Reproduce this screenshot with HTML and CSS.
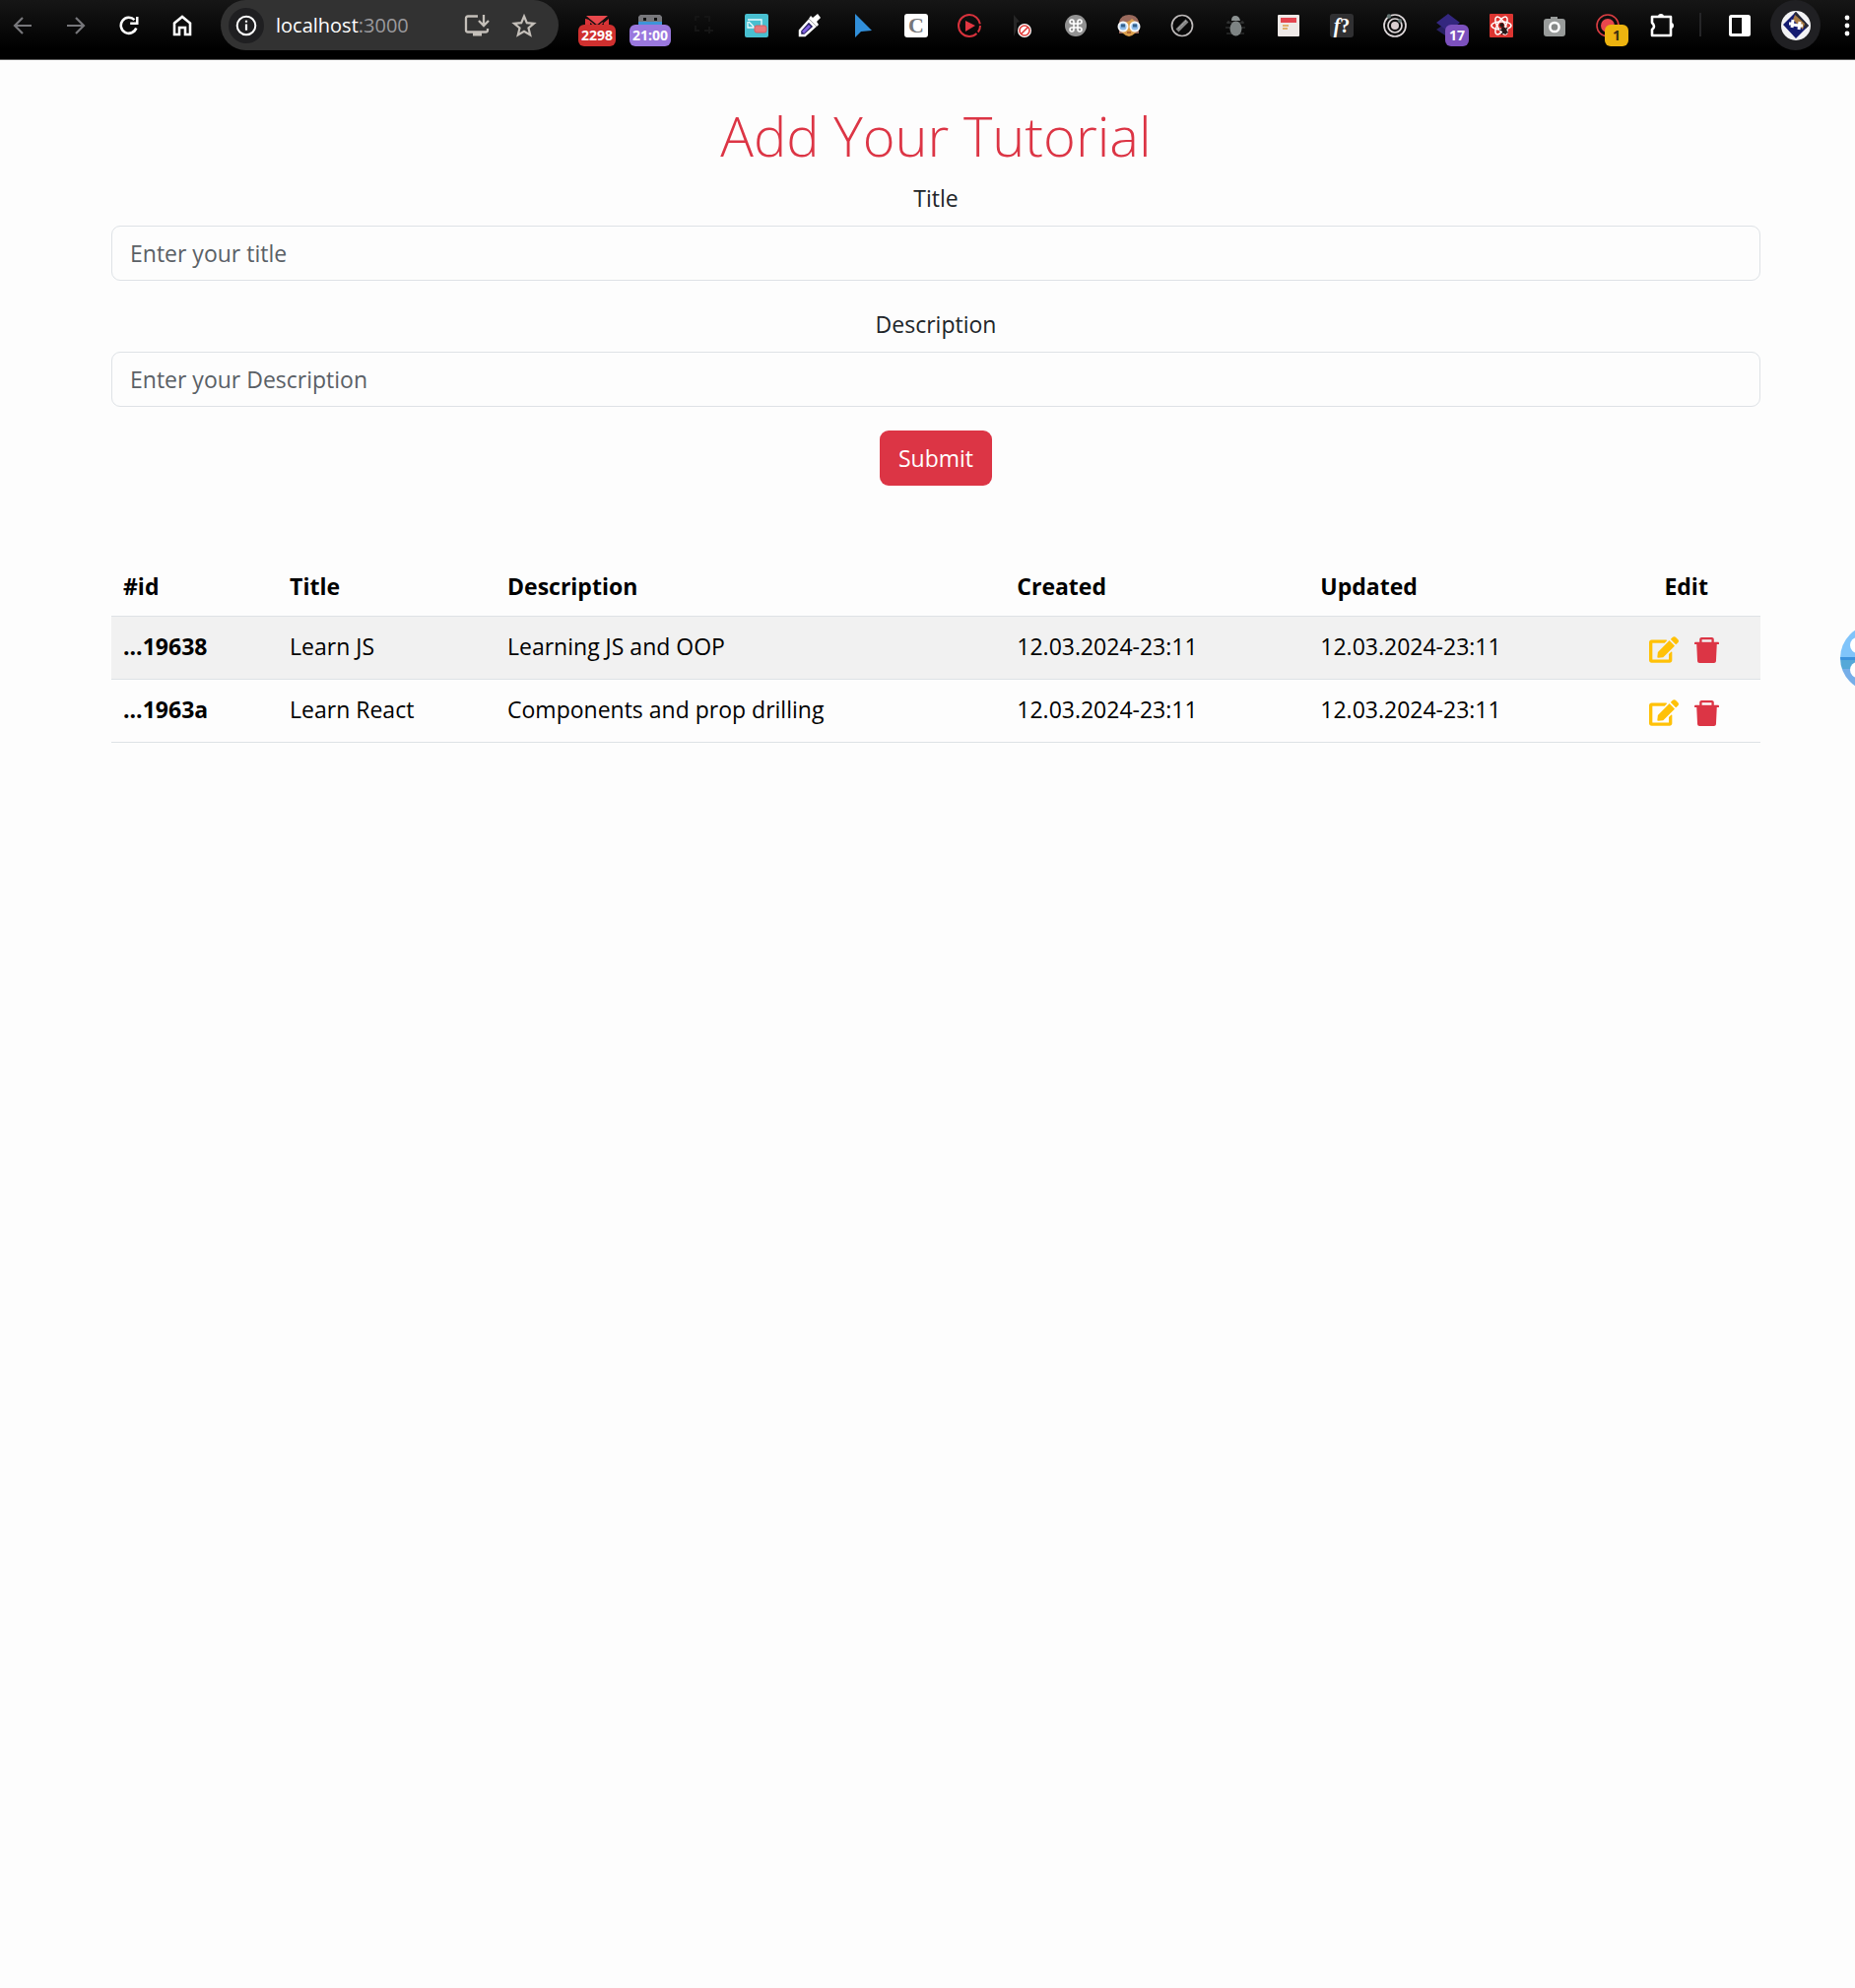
FILE: index.html
```html
<!DOCTYPE html>
<html lang="en">
<head>
<meta charset="utf-8">
<meta name="viewport" content="width=device-width, initial-scale=1">
<title>Add Your Tutorial</title>
<link rel="stylesheet" href="styles.css">
</head>
<body>
<header class="toolbar">
  <button class="tool dim" aria-label="Back"><svg width="20" height="20" viewBox="0 0 20 20"><path d="M19 10H2M10 2l-8 8 8 8" fill="none" stroke="currentColor" stroke-width="2.2"/></svg></button>
  <button class="tool dim" aria-label="Forward"><svg width="20" height="20" viewBox="0 0 20 20"><path d="M1 10h17M10 2l8 8-8 8" fill="none" stroke="currentColor" stroke-width="2.2"/></svg></button>
  <button class="tool" aria-label="Reload"><svg width="20" height="20" viewBox="0 0 20 20"><path d="M17.300 12.500A8 8 0 1 1 15.500 4.200" fill="none" stroke="currentColor" stroke-width="2.600"/><path d="M19.500 1v8h-8.300V6.500H17V1z" fill="currentColor"/></svg></button>
  <button class="tool" aria-label="Home"><svg width="20" height="22" viewBox="0 0 20 22"><path d="M2 8.500 10 2l8 6.500V20h-5v-7H7v7H2z" fill="none" stroke="currentColor" stroke-width="2.600"/></svg></button>

  <div class="address">
    <button class="site-info" aria-label="Site information"><svg width="22" height="22" viewBox="0 0 22 22"><circle cx="11" cy="11" r="9.300" fill="none" stroke="currentColor" stroke-width="2"/><path d="M11 9.500v6.300M11 5.800v2" stroke="currentColor" stroke-width="2.200"/></svg></button>
    <span class="url">localhost<span class="port">:3000</span></span>
    <button class="address-action" aria-label="Install app"><svg width="26" height="24" viewBox="0 0 26 24"><path d="M14 2.500H4Q2 2.500 2 4.500v12q0 2 2 2h18q2 0 2-2V15M20 1v10M15 7l5 5 5-5" fill="none" stroke="currentColor" stroke-width="2.300"/><path d="M9 18h9v4.500H9z" fill="currentColor"/></svg></button>
    <button class="address-action" aria-label="Bookmark"><svg width="26" height="26" viewBox="0 0 26 26"><path d="m13 3.500 2.800 6.700 7.200.6-5.500 4.700 1.700 7-6.200-3.800-6.200 3.800 1.700-7L3 10.800l7.200-.6z" fill="none" stroke="currentColor" stroke-width="2.200"/></svg></button>
  </div>

  <nav class="extensions" aria-label="Extensions">
    <button class="tool" aria-label="Mail"><svg width="24" height="24" viewBox="0 0 24 24"><path d="M0 5v15h5V9l7 6 7-6v11h5V5l-5 4z" fill="#d93438"/><path d="M1 2h22l-7 8H8z" fill="#e8484c"/><path d="m1 3 11 9 11-9" stroke="#111" stroke-width="1.500" fill="none"/></svg><span class="badge red">2298</span></button>
    <button class="tool" aria-label="Timer"><svg width="24" height="24" viewBox="0 0 24 24"><path d="M2 1h20l2 2v6H0V3z" fill="#77777b"/><path d="M0 8h24v12H0z" fill="#3e94d8"/><path d="M5 4h3v3H5zM16 4h3v3h-3z" fill="#111"/></svg><span class="badge violet">21:00</span></button>
    <button class="tool" aria-label="Capture area"><svg width="24" height="24" viewBox="0 0 24 24"><path d="M4 7V3h4M13 3h5v5M4 12v5h4M18 13v7M13 17h9" fill="none" stroke="#151515" stroke-width="2"/></svg></button>
    <button class="tool" aria-label="Picture in picture"><svg width="24" height="24" viewBox="0 0 24 24"><rect width="24" height="24" rx="2" fill="#48bfd0"/><path d="M3 6h14v6M3 8v6h7M9 13 4 8" fill="none" stroke="#eafcff" stroke-width="1.300"/><rect x="10" y="12" width="12" height="7" rx="2" fill="#e7797d" stroke="#d85c62"/></svg></button>
    <button class="tool" aria-label="Eyedropper"><svg width="24" height="24" viewBox="0 0 24 24"><path d="M11 7 2 17v5h5l10-9z" fill="#211a5c" stroke="#fff" stroke-width="2.500"/><path d="m5 19 7-7" stroke="#8061df" stroke-width="3"/><path d="m11 5 8 8 2-2-2-3 4-4-3-4-5 4-2-2z" fill="#fff"/></svg></button>
    <button class="tool" aria-label="Pointer"><svg width="24" height="24" viewBox="0 0 24 24"><path d="M4 0v24l6-6 11-1z" fill="#318fda"/></svg></button>
    <button class="tool" aria-label="Citation"><span class="letter-tile">C</span></button>
    <button class="tool" aria-label="Play"><svg width="24" height="24" viewBox="0 0 24 24"><circle cx="12" cy="12" r="11" fill="none" stroke="#d8323c" stroke-width="2" stroke-dasharray="7 2 58 3"/><path d="m8 7 10 5-10 6z" fill="#e23742"/></svg></button>
    <button class="tool" aria-label="Cursor blocker"><svg width="24" height="24" viewBox="0 0 24 24"><path d="M3 1v22l3-7V9l3-1z" fill="#262626"/><circle cx="14" cy="17" r="7" fill="#fff"/><circle cx="14" cy="17" r="5" fill="none" stroke="#df3c39" stroke-width="1.600"/><path d="m10.500 20.500 7-7" stroke="#df3c39" stroke-width="1.600"/></svg></button>
    <button class="tool" aria-label="Command"><svg width="22" height="22" viewBox="0 0 22 22"><circle cx="11" cy="11" r="11" fill="#929292"/><path d="M9 9H7a2 2 0 1 1 2-2v8a2 2 0 1 1-2-2h8a2 2 0 1 1-2 2V7a2 2 0 1 1 2 2z" fill="none" stroke="#fff" stroke-width="1.600"/></svg></button>
    <button class="tool" aria-label="Reader"><svg width="24" height="24" viewBox="0 0 24 24"><path d="M2 20V8q2-7 10-7t10 7v12h-4H5z" fill="#9a6a5d"/><path d="M3 9q9 0 12-4l6 5v4q-2 8-9 9-7-1-9-9z" fill="#d99e4c"/><g fill="#8dbbe9" stroke="#f5f7fa" stroke-width="2"><circle cx="6" cy="13" r="4.500"/><circle cx="18" cy="13" r="4.500"/></g><path d="M4 12h4M16 12h4" stroke="#35618b" stroke-width="3"/><path d="M10 19h4" stroke="#9d522c" stroke-width="1.500"/></svg></button>
    <button class="tool" aria-label="Ruler"><svg width="24" height="24" viewBox="0 0 24 24"><circle cx="12" cy="12" r="10.500" fill="#080808" stroke="#bdb9b9" stroke-width="1.700"/><path d="m7 17 10-10" stroke="#858585" stroke-width="4"/><path d="m8 15 8-8" stroke="#bbb" stroke-dasharray="1 1"/></svg></button>
    <button class="tool" aria-label="Bug"><svg width="24" height="24" viewBox="0 0 24 24"><path d="M3 9h18M2 14h20M3 20h18M5 7v3M19 7v3" stroke="#3d3f3f"/><path d="M8 7q0-5 4-5t5 5z" fill="#8c9292"/><ellipse cx="12.500" cy="15" rx="6" ry="7.500" fill="#7d8383"/></svg></button>
    <button class="tool" aria-label="Page notes"><svg width="22" height="22" viewBox="0 0 22 22"><rect width="22" height="22" rx="1" fill="#eee9e7"/><path d="M3 3h16v5H3z" fill="#e44550"/><path d="M5 11h6M5 14h5" stroke="#dd9d45" stroke-width="1.700"/></svg></button>
    <button class="tool" aria-label="Font finder"><span class="font-tile"><i>f</i>?</span></button>
    <button class="tool" aria-label="Target"><svg width="24" height="24" viewBox="0 0 24 24"><g fill="none" stroke="#ded8da" stroke-width="1.700"><circle cx="12" cy="12" r="11"/><circle cx="12" cy="12" r="7"/></g><circle cx="12" cy="12" r="4" fill="#d8cdce"/><circle cx="6" cy="2.500" r="2.200" fill="#637371"/><circle cx="17" cy="7" r="2" fill="#637371"/></svg></button>
    <button class="tool" aria-label="Layers"><svg width="24" height="24" viewBox="0 0 24 24"><path d="m0 16 12-8 12 8-12 8z" fill="#282063"/><path d="m0 9 12-9 12 9-12 9z" fill="#34277f"/></svg><span class="badge purple offset">17</span></button>
    <button class="tool" aria-label="React tools"><svg width="24" height="24" viewBox="0 0 24 24"><rect width="24" height="24" rx="1" fill="#dc3531"/><g fill="none" stroke="#fff" stroke-width="1.500"><ellipse cx="12" cy="12" rx="10" ry="4"/><ellipse cx="12" cy="12" rx="10" ry="4" transform="rotate(60 12 12)"/><ellipse cx="12" cy="12" rx="10" ry="4" transform="rotate(120 12 12)"/></g><ellipse cx="15" cy="17" rx="2.500" ry="4" fill="#241717" transform="rotate(-25 15 17)"/><circle cx="12.500" cy="11.500" r="2.200" fill="#241717"/><path d="m10 16 9 3M18 14l-6 7" stroke="#241717" stroke-width="1.200"/></svg></button>
    <button class="tool" aria-label="Screenshot"><svg width="24" height="24" viewBox="0 0 24 24"><path d="M8 5V3h7v2h5q3 0 3 3v12q0 3-3 3H4q-3 0-3-3V8q0-3 3-3z" fill="#989b9a"/><circle cx="12" cy="13.500" r="4.600" fill="#858887" stroke="#fff" stroke-width="2.500"/></svg></button>
    <button class="tool" aria-label="Recorder"><svg width="24" height="24" viewBox="0 0 24 24"><circle cx="12" cy="12" r="11" fill="none" stroke="#d93d42" stroke-width="1.600"/><circle cx="12" cy="12" r="7" fill="#e8474d"/></svg><span class="badge yellow offset">1</span></button>
    <button class="tool" aria-label="Extensions"><svg width="26" height="26" viewBox="0 0 26 26"><path d="M4 4h19v19H4v-6q4-3 0-7z" fill="none" stroke="currentColor" stroke-width="2.600" stroke-linejoin="round"/><path d="M10 4a3 3 0 0 1 6 0zM23 10a3 3 0 0 1 0 6z" fill="currentColor"/></svg></button>
  </nav>
  <span class="divider"></span>
  <button class="tool" aria-label="Side panel"><svg width="22" height="22" viewBox="0 0 22 22"><path d="M2.500 0h17Q22 0 22 2.500v17q0 2.500-2.500 2.500h-17Q0 22 0 19.500v-17Q0 0 2.500 0M3 3v16h10V3z" fill="currentColor" fill-rule="evenodd"/></svg></button>
  <button class="profile" aria-label="Profile"><svg width="30" height="30" viewBox="0 0 30 30"><circle cx="15" cy="15" r="15" fill="#f2f2f4"/><path d="m15 1 13 14-13 13L2 14z" fill="#141b70"/><path d="m15 1 13 14-3 3L13 3z" fill="#292933"/><path d="m14 4 10 9-2 6-10-10z" fill="#a87a44"/><path d="m12 9-1 8M19 11l-1 8M8 13h4M12 14l6 1M18 15h4" stroke="#fff" stroke-width="3"/></svg></button>
  <button class="menu" aria-label="Menu"><svg width="6" height="22" viewBox="0 0 6 22"><g fill="currentColor"><circle cx="3" cy="3" r="2.400"/><circle cx="3" cy="11" r="2.400"/><circle cx="3" cy="19" r="2.400"/></g></svg></button>
</header>

<main class="page">
  <h1>Add Your Tutorial</h1>
  <form class="tutorial-form">
    <div class="field">
      <label for="title">Title</label>
      <input id="title" type="text" placeholder="Enter your title">
    </div>
    <div class="field">
      <label for="description">Description</label>
      <input id="description" type="text" placeholder="Enter your Description">
    </div>
    <button class="submit" type="submit">Submit</button>
  </form>

  <table class="tutorials">
    <colgroup><col class="col-id"><col class="col-title"><col class="col-description"><col class="col-date"><col class="col-date"><col class="col-edit"></colgroup>
    <thead>
      <tr><th scope="col">#id</th><th scope="col">Title</th><th scope="col">Description</th><th scope="col">Created</th><th scope="col">Updated</th><th scope="col" class="center">Edit</th></tr>
    </thead>
    <tbody>
      <tr>
        <th scope="row">...19638</th><td>Learn JS</td><td>Learning JS and OOP</td><td>12.03.2024-23:11</td><td>12.03.2024-23:11</td>
        <td><div class="actions">
          <button class="edit" aria-label="Edit Learn JS"><svg width="30" height="27" viewBox="0 0 576 512"><use href="#icon-edit"/></svg></button>
          <button class="delete" aria-label="Delete Learn JS"><svg width="25" height="26" viewBox="128 112 768 800"><use href="#icon-trash"/></svg></button>
        </div></td>
      </tr>
      <tr>
        <th scope="row">...1963a</th><td>Learn React</td><td>Components and prop drilling</td><td>12.03.2024-23:11</td><td>12.03.2024-23:11</td>
        <td><div class="actions">
          <button class="edit" aria-label="Edit Learn React"><svg width="30" height="27" viewBox="0 0 576 512"><use href="#icon-edit"/></svg></button>
          <button class="delete" aria-label="Delete Learn React"><svg width="25" height="26" viewBox="128 112 768 800"><use href="#icon-trash"/></svg></button>
        </div></td>
      </tr>
    </tbody>
  </table>
</main>

<button class="assistant" aria-label="Open assistant"><svg width="15" height="56" viewBox="0 0 15 56"><clipPath id="disc"><circle cx="34" cy="28" r="34"/></clipPath><g clip-path="url(#disc)"><path d="M0 0h15v28H0z" fill="#80c4fa"/><path d="M0 27h15v3H0z" fill="#3c92dc"/><path d="M0 30h15v9H0z" fill="#55a8d8"/><path d="M0 39h15v17H0z" fill="#76aee8"/></g><circle cx="18" cy="15" r="8" fill="#fff"/><circle cx="18" cy="40" r="8" fill="#fff"/></svg></button>

<svg class="sprite" width="0" height="0" aria-hidden="true">
  <defs>
    <path id="icon-edit" fill="currentColor" d="M402.600 83.200l90.200 90.200c3.800 3.800 3.800 10 0 13.800L274.400 405.600l-92.800 10.300c-12.400 1.400-22.900-9.100-21.500-21.500l10.300-92.800L388.800 83.200c3.800-3.800 10-3.800 13.800 0zm162-22.900l-48.800-48.800c-15.200-15.200-39.900-15.200-55.200 0l-35.400 35.400c-3.800 3.800-3.800 10 0 13.800l90.200 90.200c3.800 3.800 10 3.800 13.800 0l35.400-35.400c15.200-15.300 15.200-40 0-55.200zM384 346.200V448H64V128h229.800c3.200 0 6.200-1.300 8.500-3.500l40-40c7.600-7.600 2.200-20.500-8.500-20.500H48C21.500 64 0 85.500 0 112v352c0 26.500 21.500 48 48 48h352c26.500 0 48-21.500 48-48V306.200c0-10.700-12.900-16-20.500-8.500l-40 40c-2.200 2.300-3.500 5.300-3.500 8.500z"/>
    <path id="icon-trash" fill="currentColor" d="M864 256H736v-80c0-35.300-28.700-64-64-64H352c-35.300 0-64 28.700-64 64v80H160c-17.700 0-32 14.300-32 32v32c0 4.400 3.600 8 8 8h60.400l24.700 523c1.600 34.100 29.800 61 63.900 61h454c34.200 0 62.300-26.800 63.900-61l24.700-523H888c4.400 0 8-3.600 8-8v-32c0-17.700-14.300-32-32-32zm-200 0H360v-72h304v72z"/>
  </defs>
</svg>
</body>
</html>
```
FILE: styles.css
```css
* { box-sizing: border-box; }

body {
  margin: 0;
  background: #fdfdfd;
  color: #212529;
  font: 23px/36px "Open Sans", "Noto Sans", sans-serif;
}

button {
  padding: 0;
  border: 0;
  background: none;
  color: inherit;
  font: inherit;
}

svg { display: block; }

.sprite { position: absolute; }

/* Browser toolbar */
.toolbar {
  display: flex;
  gap: 8px;
  height: 61px;
  padding-bottom: 9px;
  overflow: hidden;
  background: linear-gradient(#161616, #000 50px);
  border-bottom: 1px solid #5a5a5a;
  color: #fff;
}

.tool {
  position: relative;
  display: flex;
  flex: none;
  align-items: center;
  justify-content: center;
  width: 46px;
  height: 51px;
}

.dim { color: #77777b; }

.address {
  display: flex;
  flex: none;
  align-items: center;
  gap: 12px;
  width: 343px;
  height: 51px;
  margin: 0 8px;
  padding: 0 22px 0 8px;
  border-radius: 26px;
  background: #323232;
}

.site-info {
  display: flex;
  align-items: center;
  justify-content: center;
  width: 36px;
  height: 36px;
  border-radius: 50%;
  background: #1f1f21;
}

.url {
  flex: 1;
  font-size: 20px;
}

.port { color: #9b9a9e; }

.address-action {
  margin-left: 10px;
  color: #c4bfb9;
}

.extensions {
  display: flex;
  gap: 8px;
}

.badge {
  position: absolute;
  top: 25px;
  left: 50%;
  height: 22px;
  padding: 0 3px;
  border-radius: 6px;
  transform: translateX(-50%);
  color: #fff;
  font-size: 14px;
  font-weight: 700;
  line-height: 22px;
}

.offset {
  left: 32px;
  width: 24px;
}

.red { background: #d0302f; }
.violet { background: #9a78de; }
.purple { background: #7c51bd; }
.yellow { background: #edb30f; color: #3b2d12; }

.letter-tile,
.font-tile {
  width: 24px;
  height: 24px;
  border-radius: 3px;
  background: #fff;
  color: #77777a;
  font: 700 22px/24px "Liberation Serif", serif;
}

.font-tile {
  background: #303032;
  color: #fff;
  font-size: 20px;
}

.divider {
  flex: none;
  width: 2px;
  height: 24px;
  margin: 13px 8px 0;
  background: #252527;
}

.profile {
  display: flex;
  flex: none;
  align-items: center;
  justify-content: center;
  width: 51px;
  height: 51px;
  border-radius: 50%;
  background: #202023;
}

.menu {
  display: flex;
  flex: none;
  align-items: center;
  margin-left: 16px;
}

/* Tutorial page */
.page {
  padding: 40px 96px 48px 113px;
}

h1 {
  margin: 0 0 10px;
  color: #dc3545;
  font-size: 56px;
  font-weight: 300;
  line-height: 72px;
  text-align: center;
}

.tutorial-form {
  display: flex;
  flex-direction: column;
  align-items: center;
  gap: 24px;
  margin-bottom: 72px;
}

.field {
  display: flex;
  flex-direction: column;
  align-items: center;
  gap: 10px;
  width: 100%;
}

.field + .field { padding-top: 2px; }

input {
  width: 100%;
  height: 56px;
  padding: 8px 18px;
  border: 1px solid #dee2e6;
  border-radius: 9px;
  background: #fdfdfd;
  color: #212529;
  font: inherit;
}

input::placeholder { color: #5a6066; opacity: 1; }

.submit {
  height: 56px;
  padding: 0 19px;
  border-radius: 9px;
  background: #dc3545;
  color: #fff;
}

.tutorials {
  width: 100%;
  border-collapse: collapse;
  table-layout: fixed;
  color: #000;
}

.tutorials th,
.tutorials td {
  padding: 12px;
  border-bottom: 1px solid #dee2e6;
  text-align: left;
  vertical-align: top;
}

.tutorials tbody th,
.tutorials tbody td { height: 64px; }

.tutorials tbody tr:nth-child(odd) { background: #f1f1f1; }

.tutorials .center { text-align: center; }

.col-id { width: 10.1%; }
.col-title { width: 13.2%; }
.col-description { width: 30.9%; }
.col-date { width: 18.4%; }
.col-edit { width: 9%; }

.actions {
  display: flex;
  justify-content: center;
  gap: 16px;
  padding: 8px 4px 0 0;
}

.edit { color: #ffc107; }
.delete { color: #dc3545; }

.assistant {
  position: absolute;
  top: 640px;
  right: 0;
}
```
